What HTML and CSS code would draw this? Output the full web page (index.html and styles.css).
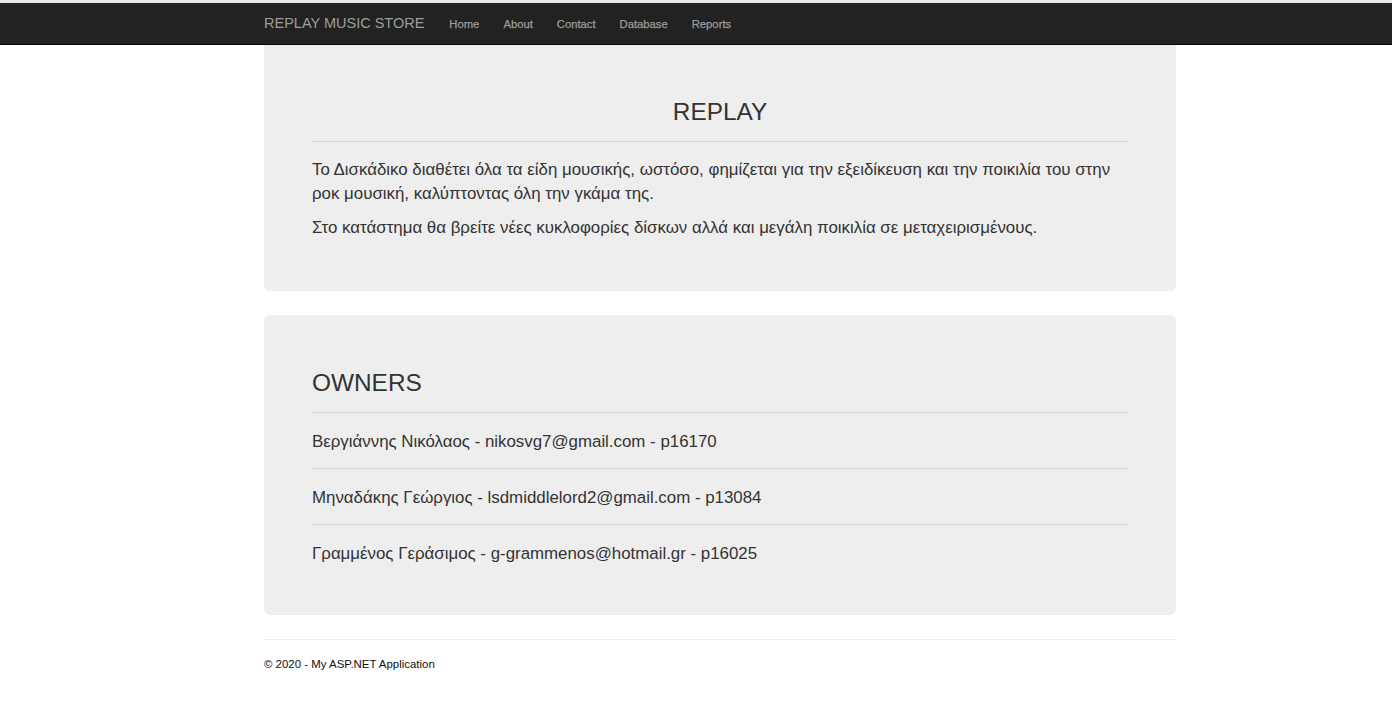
FILE: index.html
```html
<!DOCTYPE html>
<html lang="el">
<head>
<meta charset="utf-8">
<title>Replay Music Store</title>
<link rel="stylesheet" href="styles.css">
</head>
<body>
<div class="topstrip"></div>
<nav class="navbar">
  <div class="container nav-inner">
    <a class="brand" href="#">REPLAY MUSIC STORE</a>
    <ul class="nav-links">
      <li><a href="#">Home</a></li>
      <li><a href="#">About</a></li>
      <li><a href="#">Contact</a></li>
      <li><a href="#">Database</a></li>
      <li><a href="#">Reports</a></li>
    </ul>
  </div>
</nav>
<main class="container">
  <section class="jumbotron intro">
    <h3 class="title center">REPLAY</h3>
    <hr class="rule rule-title">
    <p class="lead">Το Δισκάδικο διαθέτει όλα τα είδη μουσικής, ωστόσο, φημίζεται για την εξειδίκευση και την ποικιλία του στην ροκ μουσική, καλύπτοντας όλη την γκάμα της.</p>
    <p class="lead">Στο κατάστημα θα βρείτε νέες κυκλοφορίες δίσκων αλλά και μεγάλη ποικιλία σε μεταχειρισμένους.</p>
  </section>
  <section class="jumbotron owners">
    <h3 class="title">OWNERS</h3>
    <hr class="rule rule-owner">
    <p class="owner">Βεργιάννης Νικόλαος - nikosvg7@gmail.com - p16170</p>
    <hr class="rule rule-owner">
    <p class="owner">Μηναδάκης Γεώργιος - lsdmiddlelord2@gmail.com - p13084</p>
    <hr class="rule rule-owner">
    <p class="owner">Γραμμένος Γεράσιμος - g-grammenos@hotmail.gr - p16025</p>
  </section>
  <footer class="footer">
    <hr class="footer-rule">
    <p>© 2020 - My ASP.NET Application</p>
  </footer>
</main>
</body>
</html>
```
FILE: styles.css
```css
* { box-sizing: border-box; }
html, body { margin: 0; padding: 0; }
body {
  font-family: "Liberation Sans", Arial, sans-serif;
  color: #333;
  background: #fff;
}
.container {
  width: 912px;
  margin-left: 264px;
}
.topstrip {
  height: 3px;
  background: #e8e8e8;
}
.navbar {
  height: 42px;
  background: #222;
  border-bottom: 1px solid #080808;
}
.nav-inner {
  display: flex;
  align-items: center;
  height: 40px;
}
.brand {
  color: #9d9d9d;
  font-size: 14.5px;
  text-decoration: none;
  margin-right: 25px;
}
.nav-links {
  display: flex;
  list-style: none;
  margin: 0;
  padding: 0;
  gap: 24px;
}
.nav-links a {
  color: #9d9d9d;
  font-size: 11.25px;
  text-decoration: none;
  font-weight: normal;
  -webkit-text-stroke: 0.25px #9d9d9d;
}
.jumbotron {
  background: #eee;
  border-radius: 6px;
  padding-left: 48px;
  padding-right: 48px;
}
.intro {
  border-top-left-radius: 0;
  border-top-right-radius: 0;
  padding-top: 54px;
  padding-bottom: 51px;
}
.owners {
  margin-top: 24px;
  padding-top: 55px;
  padding-bottom: 50px;
}
.title {
  margin: 0;
  font-size: 24.4px;
  font-weight: normal;
  line-height: 26px;
}
.owners .title { padding-bottom: 1px; }
.center { text-align: center; }
.rule {
  border: 0;
  border-top: 1px solid #d5d5d5;
  height: 0;
}
.rule-title { margin: 16px 0 16px; }
.rule-owner { margin: 15px 0 16px; }
.lead {
  margin: 0 0 10px;
  font-size: 16.88px;
  line-height: 24px;
}
.lead:last-child { margin-bottom: 0; }
.owner {
  margin: 0;
  padding-top: 2px;
  font-size: 16.88px;
  line-height: 22px;
}
.footer { padding-top: 24px; }
.footer-rule {
  border: 0;
  border-top: 1px solid #eee;
  height: 0;
  margin: 0 0 17px;
}
.footer p {
  margin: 0;
  font-size: 11.45px;
  line-height: 15px;
  color: #111;
}
```
